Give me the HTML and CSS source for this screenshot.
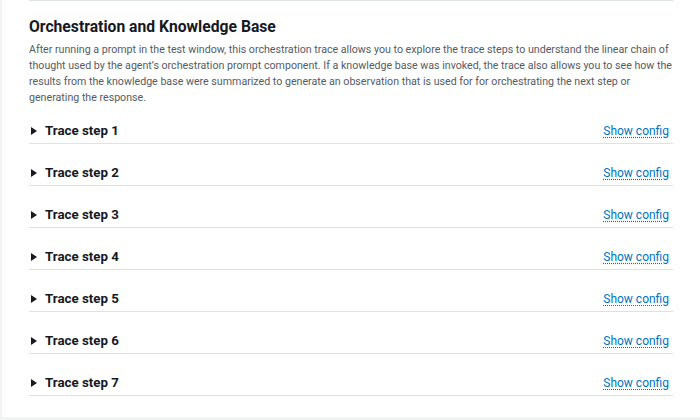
FILE: index.html
```html
<!DOCTYPE html>
<html>
<head>
<meta charset="utf-8">
<link rel="stylesheet" href="styles.css">
</head>
<body>
<div class="frame">
  <div class="panel">
    <section class="section">
      <h2 class="title">Orchestration and Knowledge Base</h2>
      <p class="desc">After running a prompt in the test window, this orchestration trace allows you to explore the trace steps to understand the linear chain of<br>thought used by the agent’s orchestration prompt component. If a knowledge base was invoked, the trace also allows you to see how the<br>results from the knowledge base were summarized to generate an observation that is used for for orchestrating the next step or<br>generating the response.</p>
      <ul class="steps">
        <li class="step"><span class="caret"></span><span class="label">Trace step 1</span><a class="config">Show config</a></li>
        <li class="step"><span class="caret"></span><span class="label">Trace step 2</span><a class="config">Show config</a></li>
        <li class="step"><span class="caret"></span><span class="label">Trace step 3</span><a class="config">Show config</a></li>
        <li class="step"><span class="caret"></span><span class="label">Trace step 4</span><a class="config">Show config</a></li>
        <li class="step"><span class="caret"></span><span class="label">Trace step 5</span><a class="config">Show config</a></li>
        <li class="step"><span class="caret"></span><span class="label">Trace step 6</span><a class="config">Show config</a></li>
        <li class="step"><span class="caret"></span><span class="label">Trace step 7</span><a class="config">Show config</a></li>
      </ul>
    </section>
  </div>
</div>
</body>
</html>
```

FILE: styles.css
```css
html, body {
  margin: 0;
  padding: 0;
  background: #f2f3f3;
}
body {
  font-family: Roboto, "Liberation Sans", sans-serif;
  color: #16191f;
  width: 700px;
  height: 420px;
  overflow: hidden;
}
.frame {
  padding-left: 2px;
  padding-bottom: 3px;
}
.panel {
  background: #ffffff;
  height: 417px;
  padding-left: 27px;
  padding-right: 27px;
}
.section {
  border-top: 1px solid #dfe2e2;
  padding-top: 16px;
}
.title {
  margin: 0;
  font-size: 15.7px;
  line-height: 20px;
  font-weight: 700;
  color: #16191f;
}
.desc {
  margin: 5px 0 0;
  font-size: 10.65px;
  line-height: 16px;
  color: #545b64;
  white-space: nowrap;
}
.steps {
  list-style: none;
  margin: 0;
  padding: 0;
}
.step {
  display: flex;
  align-items: center;
  padding: 21px 4px 4px 2px;
  border-bottom: 1px solid #dfe2e2;
  line-height: 16px;
}
.step:first-child {
  padding-top: 17px;
}
.caret {
  width: 0;
  height: 0;
  border-top: 4px solid transparent;
  border-bottom: 4px solid transparent;
  border-left: 6px solid #16191f;
  margin-right: 8px;
}
.label {
  flex: 1;
  font-size: 13.3px;
  font-weight: 700;
  color: #16191f;
}
.config {
  font-size: 12px;
  color: #0073bb;
  text-decoration: underline dotted #0073bb;
  text-underline-offset: 2px;
  cursor: pointer;
}
```
